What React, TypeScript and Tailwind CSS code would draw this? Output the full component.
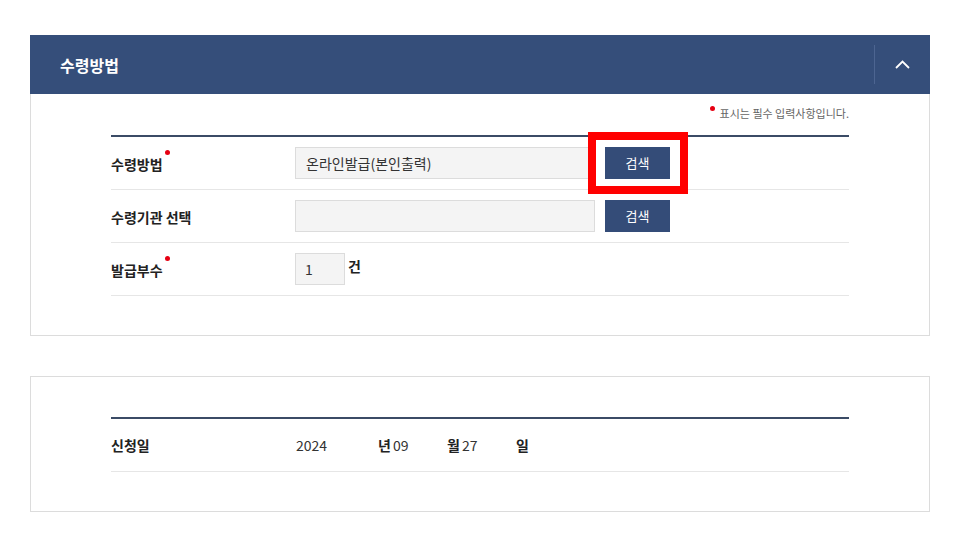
import React from 'react';

const FONT = { fontFamily: '"Noto Sans CJK KR", "Noto Sans", sans-serif' };

const RequiredDot = () => (
  <span className="absolute -right-[7px] top-[-4px] h-[5px] w-[5px] rounded-full bg-[#e60012]" />
);

const Label: React.FC<{ text: string; required?: boolean }> = ({ text, required }) => (
  <div className="w-[184px] shrink-0">
    <span className="relative inline-block text-[14px] font-bold text-[#222]">
      {text}
      {required && <RequiredDot />}
    </span>
  </div>
);

const Row: React.FC<{ children: React.ReactNode }> = ({ children }) => (
  <div className="flex h-[53px] items-center border-b border-[#e6e6e6]">{children}</div>
);

const SearchButton: React.FC<{ highlight?: boolean }> = ({ highlight }) => (
  <div className="relative ml-[10px]">
    <button
      type="button"
      className="h-[32px] w-[65px] bg-[#344c78] text-[13px] text-white"
    >
      검색
    </button>
    {highlight && (
      <div className="pointer-events-none absolute -left-[17px] -top-[15px] h-[62px] w-[100px] border-[8px] border-[#ff0000]" />
    )}
  </div>
);

export default function App() {
  return (
    <div className="min-h-screen bg-white" style={FONT}>
      <div className="ml-[30px] w-[900px] pt-[35px] pb-[31px]">
        {/* 수령방법 */}
        <section>
          <div className="flex h-[59px] items-center bg-[#354e7a]">
            <h2 className="flex-1 pl-[30px] text-[16px] font-bold text-white">수령방법</h2>
            <div className="my-[10px] flex h-[39px] w-[56px] items-center justify-center border-l border-[#4d6591]">
              <svg width="15" height="9" viewBox="0 0 15 9" fill="none">
                <polyline points="1,8 7.5,1.5 14,8" stroke="white" strokeWidth="1.8" />
              </svg>
            </div>
          </div>
          <div className="border border-t-0 border-[#dcdcdc] px-[80px] pt-[9px] pb-[39px]">
            <p className="mb-[11px] flex h-[21px] items-center justify-end text-[11px] text-[#666]">
              <span className="relative mr-[6px] inline-block">
                <span className="absolute -top-[8px] left-[-4px] h-[5px] w-[5px] rounded-full bg-[#e60012]" />
              </span>
              표시는 필수 입력사항입니다.
            </p>
            <div className="border-t-2 border-[#3b4b66]">
              <Row>
                <Label text="수령방법" required />
                <div className="flex h-[32px] w-[300px] items-center border border-[#dcdcdc] bg-[#f4f4f4] px-[10px] text-[14px] text-[#333]">
                  온라인발급(본인출력)
                </div>
                <SearchButton highlight />
              </Row>
              <Row>
                <Label text="수령기관 선택" />
                <div className="h-[32px] w-[300px] border border-[#dcdcdc] bg-[#f4f4f4]" />
                <SearchButton />
              </Row>
              <Row>
                <Label text="발급부수" required />
                <div className="flex h-[32px] w-[50px] items-center border border-[#dcdcdc] bg-[#f4f4f4] px-[9px] text-[14px] text-[#333]">
                  1
                </div>
                <span className="ml-[3px] -mt-[6px] text-[14px] font-bold text-[#222]">건</span>
              </Row>
            </div>
          </div>
        </section>

        {/* 신청일 */}
        <section className="mt-[40px] border border-[#dcdcdc] px-[80px] pt-[40px] pb-[39px]">
          <div className="border-t-2 border-[#3b4b66]">
            <div className="flex h-[53px] items-center border-b border-[#e6e6e6] text-[14px]">
              <Label text="신청일" />
              <span className="w-[83px] pl-[1px] text-[#333]">2024</span>
              <span className="w-[15px] font-bold text-[#222]">년</span>
              <span className="w-[54px] text-[#333]">09</span>
              <span className="w-[15px] font-bold text-[#222]">월</span>
              <span className="w-[54px] text-[#333]">27</span>
              <span className="font-bold text-[#222]">일</span>
            </div>
          </div>
        </section>
      </div>
    </div>
  );
}
